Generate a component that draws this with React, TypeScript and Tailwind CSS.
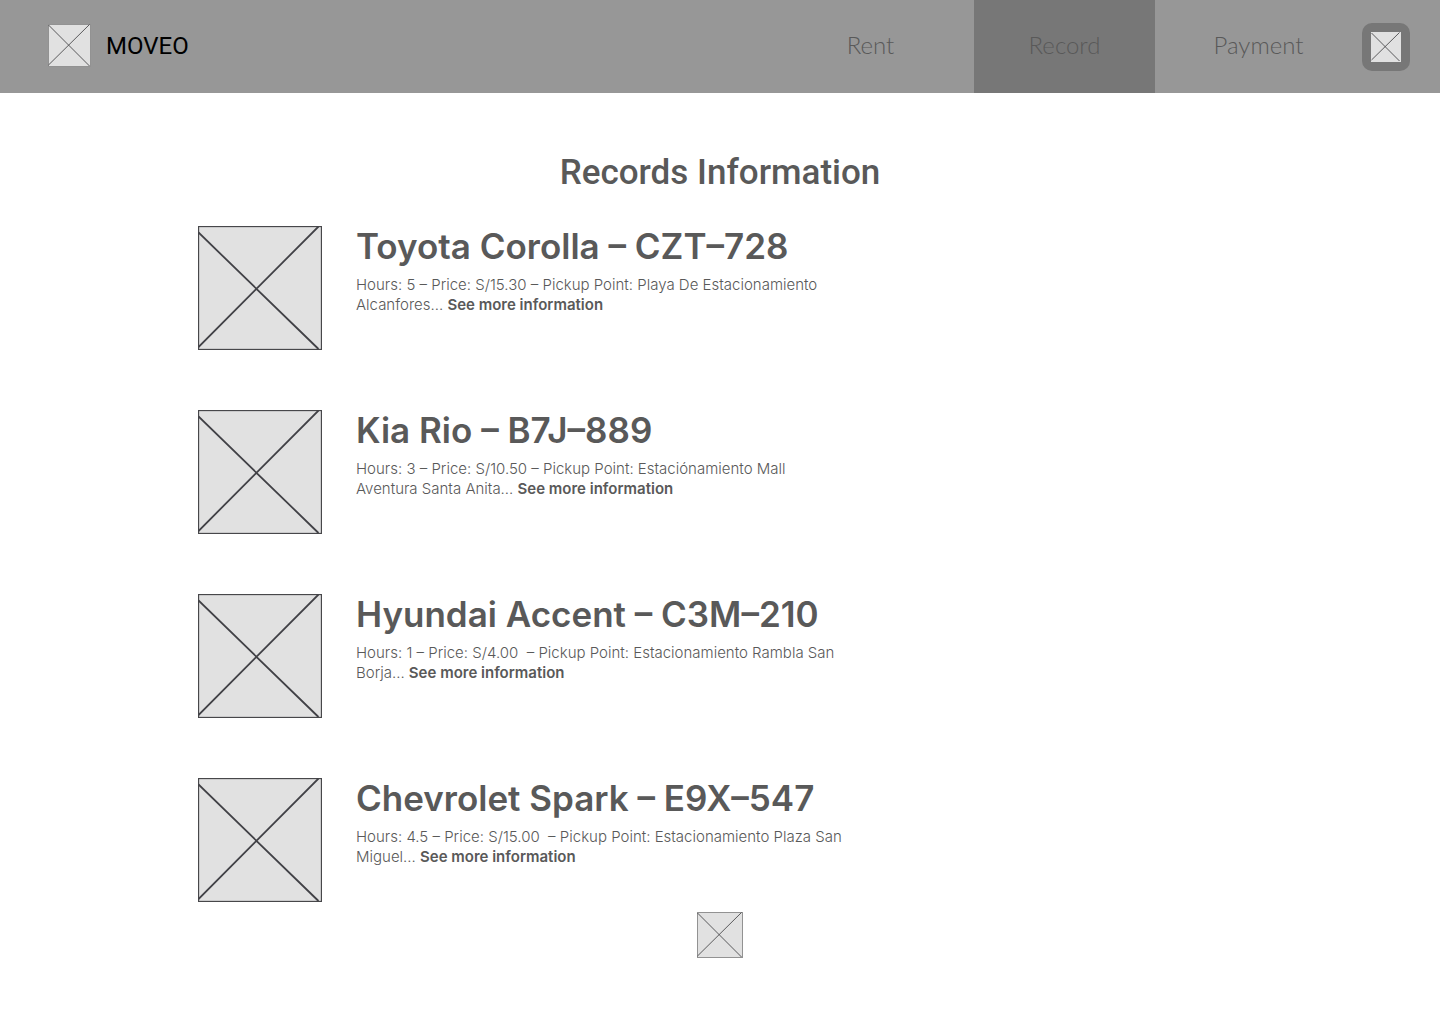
type PlaceholderProps = { size: "sm" | "md" | "nav" | "lg"; label: string };

const boxes = {
  nav: { side: 30, className: "size-[30px]" },
  sm: { side: 43, className: "size-[43px]" },
  md: { side: 46, className: "size-[46px]" },
  lg: { side: 124, className: "size-[124px]" },
};

function Placeholder({ size, label }: PlaceholderProps) {
  const { side, className } = boxes[size];
  const large = size === "lg";
  const end = side - (large ? 3 : 1);
  const top = large ? 6.5 : 1;
  const bottom = side - (large ? 3 : 2);
  const line = large ? 1.8 : 0.9;
  return (
    <svg role="img" aria-label={label} viewBox={`0 0 ${side} ${side}`} className={`shrink-0 ${className}`} fill="none">
      <rect width={side} height={side} fill="#e1e1e1" />
      {size !== "nav" && (
        <rect
          x="0.5"
          y="0.5"
          width={side - 1}
          height={side - 1}
          stroke={large ? "#47474a" : "#929292"}
          strokeWidth={large ? 1.3 : 1}
        />
      )}
      <path
        d={`M0.5 ${top}L${end - 0.5} ${side - 1}M0.5 ${bottom}L${end - 0.5} 0.5`}
        stroke={large ? "#414146" : "#4b4b4d"}
        strokeWidth={line}
      />
    </svg>
  );
}

const tabs = [
  { name: "Rent", active: false },
  { name: "Record", active: true },
  { name: "Payment", active: false },
];

const records = [
  {
    title: "Toyota Corolla – CZT–728",
    first: "Hours: 5 – Price: S/15.30 – Pickup Point: Playa De Estacionamiento",
    second: "Alcanfores...",
  },
  {
    title: "Kia Rio – B7J–889",
    first: "Hours: 3 – Price: S/10.50 – Pickup Point: Estaciónamiento Mall",
    second: "Aventura Santa Anita...",
  },
  {
    title: "Hyundai Accent – C3M–210",
    first: "Hours: 1 – Price: S/4.00  – Pickup Point: Estacionamiento Rambla San",
    second: "Borja...",
  },
  {
    title: "Chevrolet Spark – E9X–547",
    first: "Hours: 4.5 – Price: S/15.00  – Pickup Point: Estacionamiento Plaza San",
    second: "Miguel...",
  },
];

export default function App() {
  return (
    <div className="min-h-screen bg-white font-['Inter',sans-serif] text-[#595959]">
      <header className="flex h-[93px] items-center justify-between bg-[#979797] pr-[30px] pl-12">
        <a href="#home" className="flex items-center gap-[15px] pb-0.5 font-['Roboto',sans-serif] text-2xl text-black">
          <Placeholder size="sm" label="Logo" />
          MOVEO
        </a>
        <div className="flex h-full items-center gap-[13px]">
          <nav className="flex h-full gap-[13px] font-['Lato',sans-serif] text-2xl font-light">
            {tabs.map((tab) => (
              <a
                key={tab.name}
                href={`#${tab.name.toLowerCase()}`}
                aria-current={tab.active ? "page" : undefined}
                className={`flex w-[181px] items-center justify-center pb-1 ${tab.active ? "bg-[#777777]" : ""}`}
              >
                {tab.name}
              </a>
            ))}
          </nav>
          <button type="button" aria-label="Account" className="flex size-12 items-center justify-center rounded-[10px] bg-[#777777]">
            <Placeholder size="nav" label="Account" />
          </button>
        </div>
      </header>

      <main className="mx-auto flex max-w-[1044px] flex-col items-center pt-14">
        <h1 className="font-['Roboto',sans-serif] text-[35px] leading-[48px] font-medium">Records Information</h1>
        <ul className="mt-[29px] flex w-full flex-col gap-[60px]">
          {records.map((record) => (
            <li key={record.title} className="flex gap-[34px]">
              <Placeholder size="lg" label={record.title} />
              <div>
                <h2 className="text-[35px] leading-10 font-semibold">{record.title}</h2>
                <p className="mt-[9px] text-[15px] leading-5 font-light whitespace-pre-wrap">
                  {record.first}
                  <br />
                  {record.second}{" "}
                  <a href="#details" className="font-semibold">
                    See more information
                  </a>
                </p>
              </div>
            </li>
          ))}
        </ul>
        <button type="button" aria-label="More" className="mt-[10px]">
          <Placeholder size="md" label="More" />
        </button>
      </main>
    </div>
  );
}
